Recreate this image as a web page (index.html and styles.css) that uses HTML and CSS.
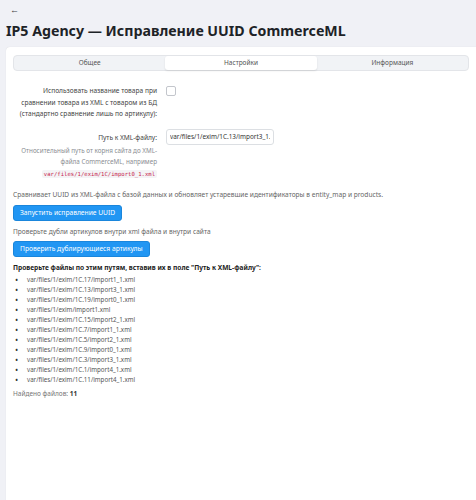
FILE: index.html
```html
<!DOCTYPE html>
<html lang="ru">
<head>
  <meta charset="UTF-8" />
  <title>IP5 Agency — Исправление UUID CommerceML</title>
  <link rel="stylesheet" href="styles.css">
</head>
<body>

  <!-- Back link -->
  <a class="back" href="#">&#8592;</a>

  <h1 class="title">IP5 Agency — Исправление UUID CommerceML</h1>

  <div class="card">

    <!-- Tabs -->
    <div class="tabs">
      <a class="tab" href="#">Общее</a>
      <a class="tab active" href="#">Настройки</a>
      <a class="tab" href="#">Информация</a>
    </div>

    <!-- Settings form -->
    <div class="form-row">
      <label class="form-label" for="use-name">Использовать название товара при сравнении товара из XML с товаром из БД (стандартно сравнение лишь по артикулу):</label>
      <div class="form-control">
        <input type="checkbox" id="use-name" class="checkbox">
      </div>
    </div>

    <div class="form-row path-row">
      <div class="form-label">
        <label for="xml-path">Путь к XML-файлу:</label>
        <p class="help">Относительный путь от корня сайта до XML-файла CommerceML, например <code>var/files/1/exim/1C/import0_1.xml</code></p>
      </div>
      <div class="form-control">
        <input type="text" id="xml-path" class="text-input" value="var/files/1/exim/1C.13/import3_1.xml">
      </div>
    </div>

    <p class="note first">Сравнивает UUID из XML-файла с базой данных и обновляет устаревшие идентификаторы в entity_map и products.</p>
    <button class="btn">Запустить исправление UUID</button>

    <p class="note">Проверьте дубли артикулов внутри xml файла и внутри сайта</p>
    <button class="btn">Проверить дублирующиеся артикулы</button>

    <!-- Found files -->
    <h3 class="files-title">Проверьте файлы по этим путям, вставив их в поле "Путь к XML-файлу":</h3>
    <ul class="files">
      <li>var/files/1/exim/1C.17/import1_1.xml</li>
      <li>var/files/1/exim/1C.13/import3_1.xml</li>
      <li>var/files/1/exim/1C.19/import0_1.xml</li>
      <li>var/files/1/exim/import1.xml</li>
      <li>var/files/1/exim/1C.15/import2_1.xml</li>
      <li>var/files/1/exim/1C.7/import1_1.xml</li>
      <li>var/files/1/exim/1C.5/import2_1.xml</li>
      <li>var/files/1/exim/1C.9/import0_1.xml</li>
      <li>var/files/1/exim/1C.3/import3_1.xml</li>
      <li>var/files/1/exim/1C.1/import4_1.xml</li>
      <li>var/files/1/exim/1C.11/import4_1.xml</li>
    </ul>
    <p class="found">Найдено файлов: <b>11</b></p>

  </div>

</body>
</html>
```

FILE: styles.css
```css
/* Basic Reset */
* {
  margin: 0;
  padding: 0;
  box-sizing: border-box;
}

body {
  font-family: "Noto Sans", "Open Sans", sans-serif;
  background: #f0f1f6;
  color: #333;
  padding: 4px 0 0 6px;
  min-height: 500px;
  display: flex;
  flex-direction: column;
}

/* Back arrow */
.back {
  display: block;
  color: #444;
  font-size: 9px;
  line-height: 12px;
  text-decoration: none;
  padding-left: 4px;
}

/* Page title */
.title {
  font-size: 14.2px;
  font-weight: bold;
  color: #1d2327;
  line-height: 20px;
  margin: 5px 0 6px;
}

/* Main card */
.card {
  flex: 1;
  background: #fff;
  border-radius: 4px 0 0 0;
  box-shadow: 0 0 1px rgba(0, 0, 0, 0.15);
  padding: 8px 7px 20px 7px;
}

/* Tabs */
.tabs {
  display: flex;
  background: #f1f3f6;
  border: 1px solid #e3e5e9;
  border-radius: 4px;
  margin-bottom: 14px;
}

.tab {
  flex: 1;
  text-align: center;
  font-size: 6.5px;
  line-height: 14px;
  color: #555;
  text-decoration: none;
}

.tab.active {
  background: #fff;
  border-radius: 3px;
  box-shadow: 0 1px 2px rgba(0, 0, 0, 0.1);
}

/* Form rows */
.form-row {
  display: flex;
  gap: 9px;
  margin-bottom: 9px;
}

.form-label {
  width: 144px;
  text-align: right;
  font-size: 6.6px;
  line-height: 11.5px;
  color: #444;
}

.form-control {
  flex: 0 0 auto;
}

.checkbox {
  appearance: none;
  display: block;
  width: 10px;
  height: 10px;
  margin-top: 1px;
  border: 1px solid #c3c6cc;
  border-radius: 2px;
  background: #fff;
}

.path-row .form-label label {
  display: block;
  margin-top: 3px;
  margin-bottom: 1.5px;
}

.help {
  color: #8a8d92;
  font-size: 6.3px;
  line-height: 11.5px;
}

.help code {
  font-family: "DejaVu Sans Mono", monospace;
  font-size: 5.6px;
  color: #c7254e;
  background: #f4f4f6;
  padding: 1px 2px;
  border-radius: 2px;
}

.text-input {
  display: block;
  width: 108px;
  height: 16px;
  border: 1px solid #dcdfe3;
  border-radius: 3px;
  font-family: inherit;
  font-size: 6.4px;
  color: #333;
  padding: 0 3px;
  outline: none;
}

/* Notes and buttons */
.note {
  font-size: 6.6px;
  line-height: 11px;
  color: #666;
  margin-bottom: 3.5px;
}

.note.first {
  margin-top: 4.5px;
  margin-bottom: 4.5px;
}

.btn {
  display: block;
  background: #2196f3;
  color: #fff;
  border: 1px solid #1a86dc;
  border-radius: 3px;
  font-family: inherit;
  font-size: 6.7px;
  line-height: 14px;
  padding: 0 6px;
  margin-bottom: 5.5px;
  cursor: pointer;
}

/* Found files */
.files-title {
  font-size: 6.6px;
  line-height: 11px;
  font-weight: bold;
  color: #222;
  margin-top: 5px;
  margin-bottom: 1.5px;
}

.files {
  list-style: none;
  padding-left: 2px;
  font-size: 6.2px;
  line-height: 10px;
  color: #555;
  margin-bottom: 3px;
}

.files li::before {
  content: "\2022";
  display: inline-block;
  width: 12px;
  font-size: 8.5px;
  line-height: 10px;
  vertical-align: top;
  color: #333;
}

.found {
  font-size: 6.5px;
  line-height: 11px;
  color: #777;
}

.found b {
  color: #333;
}
```
